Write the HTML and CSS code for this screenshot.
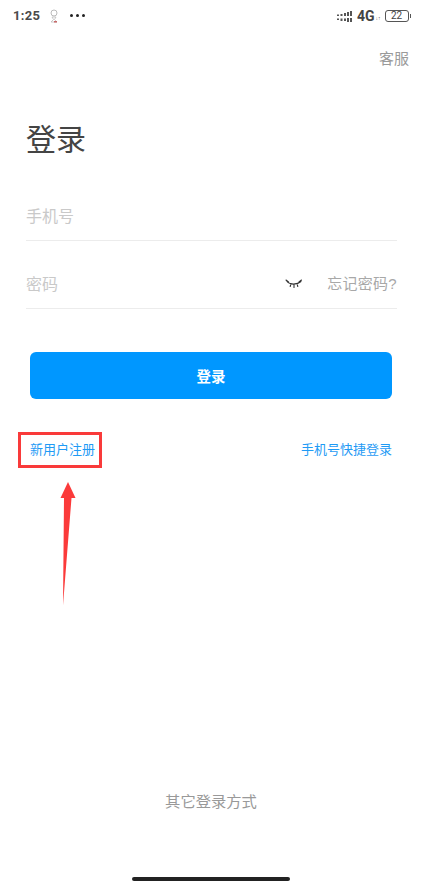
FILE: index.html
```html
<!DOCTYPE html>
<html lang="zh">
<head>
<meta charset="utf-8">
<title>登录</title>
<link rel="stylesheet" href="styles.css">
</head>
<body>
<div class="screen">
  <div class="status">
    <div class="status-left">
      <span class="time">1:25</span>
      <svg class="avatar" width="10" height="14" viewBox="0 0 10 14"><circle cx="5" cy="4" r="3" fill="none" stroke="#bbb" stroke-width="1"/><path d="M3 8h4L5.500 10.500 8 13H2l2.500-2.500z" fill="none" stroke="#bbb" stroke-width=".8"/><path d="M5 12h3v1.500H5z" fill="#c96a6a"/></svg>
      <span class="dots"><i></i><i></i><i></i></span>
    </div>
    <div class="status-right">
      <svg width="17" height="13" viewBox="0 0 17 13" class="signal"><path d="M1 4.500h2V6H1zM1 8.500h2V10H1zM4.500 4h2v2h-2zM4.500 8.500h2V11h-2zM8 3h2v3H8zM8 8.500h2V11H8zM11 2h2v4h-2zM11 8h2v4h-2zM14 1h2v5h-2zM14 8h2v4h-2z" fill="#555"/></svg>
      <span class="net">4G</span>
      <span class="arrows">↓↑</span>
      <span class="battery">22</span>
      <span class="battery-cap"></span>
    </div>
  </div>
  <div class="top-action"><a class="service">客服</a></div>
  <h1 class="title">登录</h1>
  <div class="form">
    <div class="field"><span class="placeholder">手机号</span></div>
    <div class="field">
      <span class="placeholder">密码</span>
      <span class="field-tools">
        <svg class="eye" width="18" height="12" viewBox="0 0 18 12"><path d="M2 3.500C5 7 12 7 16 3.500M1 2l2.500 2M16.500 2 14 4M6 5.500 5.200 8.500M12 5.500l.8 3M9 6v3.500" fill="none" stroke="#333" stroke-width="1.100" stroke-linecap="round"/></svg>
        <a class="forgot">忘记密码?</a>
      </span>
    </div>
  </div>
  <button class="login" type="button">登录</button>
  <div class="links">
    <a class="link">新用户注册</a>
    <a class="link">手机号快捷登录</a>
  </div>
  <div class="spacer"></div>
  <div class="other">其它登录方式</div>
  <div class="home-bar"></div>

  <div class="mark-box"></div>
  <svg class="mark-arrow" width="18" height="124" viewBox="0 0 18 124"><path d="M9 0 16.500 16H12.500L4 123.500 5 16H1.500z" fill="#fb3a3a"/></svg>
</div>
</body>
</html>
```
FILE: styles.css
```css
* { box-sizing: border-box; }
html, body { margin: 0; padding: 0; background: #fff; }
body { font-family: "Liberation Sans", "Noto Sans CJK SC", sans-serif; }
a { display: block; }
.screen {
  position: relative;
  width: 431px;
  height: 883px;
  overflow: hidden;
  display: flex;
  flex-direction: column;
  background: #fff;
}
.status {
  height: 33px;
  padding: 8px 20px 0 13px;
  display: flex;
  justify-content: space-between;
  align-items: flex-start;
  flex: none;
}
.status-left, .status-right { display: flex; align-items: center; height: 16px; }
.time { font: bold 13px/16px "Roboto", sans-serif; color: #4a4a4a; letter-spacing: .3px; }
.avatar { margin-left: 9px; }
.dots { display: flex; gap: 3px; margin-left: 11px; margin-bottom: 2px; }
.dots i { width: 3px; height: 3px; border-radius: 50%; background: #222; }
.signal { margin-right: 4px; }
.net { font: bold 14px/16px "Roboto", sans-serif; color: #444; }
.arrows { font: 5px/16px "Liberation Sans", sans-serif; color: #666; margin: 3px 3px 0 1px; width: 6px; white-space: nowrap; overflow: hidden; }
.battery {
  width: 24px;
  height: 12px;
  border: 1.500px solid #555;
  border-radius: 3px;
  font: 10px/9px "Roboto", sans-serif;
  color: #444;
  text-align: center;
}
.battery-cap { width: 1.500px; height: 4px; background: #555; margin-left: 1px; }
.top-action { display: flex; justify-content: flex-end; padding: 16px 22px 0 0; flex: none; }
.service { font-size: 15px; line-height: 20px; color: #9a9a9a; }
.title {
  margin: 52px 0 0 26px;
  font-size: 30px;
  line-height: 38px;
  font-weight: 400;
  color: #444;
  flex: none;
}
.form { margin: 19px 34px 0 26px; flex: none; }
.field {
  height: 68px;
  border-bottom: 1px solid #ececec;
  display: flex;
  justify-content: space-between;
  align-items: center;
  padding-top: 16px;
  font-size: 16px;
}
.field:first-child { height: 63px; padding-top: 11px; }
.placeholder { color: #c9c9c9; }
.field-tools { display: flex; align-items: center; gap: 24px; }
.eye { display: block; margin-top: 2px; }
.forgot { font-size: 15px; color: #a8a8a8; letter-spacing: .3px; }
.login {
  display: block;
  flex: none;
  margin: 43px 39px 0 30px;
  height: 47px;
  border: 0;
  border-radius: 6px;
  background: #0097ff;
  color: #fff;
  font-family: inherit;
  font-size: 14.500px;
  font-weight: 700;
  letter-spacing: 0;
}
.links {
  display: flex;
  justify-content: space-between;
  margin: 42px 39px 0 30px;
  flex: none;
}
.link { font-size: 13px; line-height: 18px; color: #1f9bf5; }
.spacer { flex: 1; }
.other { text-align: center; font-size: 15.300px; line-height: 20px; color: #999; margin-bottom: 71px; padding-right: 9px; flex: none; }
.home-bar { position: absolute; left: 132px; top: 877px; width: 158px; height: 4px; border-radius: 2px; background: #222; }
.mark-box { position: absolute; left: 18px; top: 432px; width: 84px; height: 36px; border: 3px solid #f93a3a; }
.mark-arrow { position: absolute; left: 59px; top: 482px; }
```
